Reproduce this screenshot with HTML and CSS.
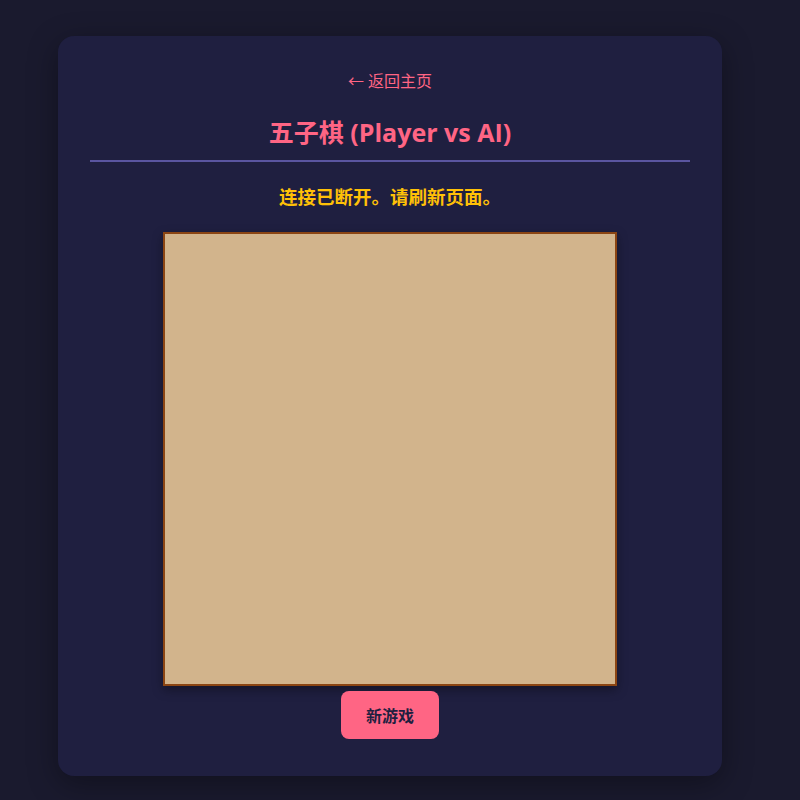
FILE: index.html
```html
<!DOCTYPE html>
<html lang="zh">
<head>
<meta charset="utf-8">
<title>五子棋</title>
<link rel="stylesheet" href="styles.css">
</head>
<body>
<main class="card">
  <a class="back" href="#">← 返回主页</a>
  <h1 class="title">五子棋 (Player vs AI)</h1>
  <p class="status">连接已断开。请刷新页面。</p>
  <div class="board"></div>
  <button class="btn">新游戏</button>
</main>
</body>
</html>
```
FILE: styles.css
```css
html, body {
  margin: 0;
  padding: 0;
}
body {
  background: #1a1a2e;
  font-family: "Open Sans", "Noto Sans CJK SC", sans-serif;
  min-height: 800px;
  display: flex;
  justify-content: center;
  padding-right: 20px;
}
.card {
  margin-top: 36px;
  width: 664px;
  height: 740px;
  box-sizing: border-box;
  background: #1f1f40;
  border-radius: 16px;
  box-shadow: 0 8px 30px rgba(0, 0, 0, 0.35);
  padding: 32px;
  display: flex;
  flex-direction: column;
  align-items: center;
}
.back {
  color: #ff6584;
  text-decoration: none;
  font-size: 16px;
  line-height: 22px;
  margin-top: 2px;
}
.title {
  align-self: stretch;
  text-align: center;
  color: #ff6584;
  font-size: 25px;
  font-weight: 700;
  line-height: 34px;
  margin: 23px 0 0;
  padding-bottom: 11px;
  border-bottom: 2px solid #5a55a0;
}
.status {
  color: #ffc107;
  font-size: 18.5px;
  font-weight: 700;
  line-height: 26px;
  margin: 22px 0 0;
}
.board {
  margin-top: 22px;
  width: 450px;
  height: 450px;
  background: #d2b48c;
  border: 2px solid #8b4513;
  box-shadow: 0 4px 10px rgba(0, 0, 0, 0.35);
}
.btn {
  margin-top: 5px;
  width: 98px;
  height: 48px;
  border: none;
  border-radius: 8px;
  background: #ff6584;
  color: #1f1f40;
  font-family: "Open Sans", "Noto Sans CJK SC", sans-serif;
  font-size: 16px;
  font-weight: 700;
}
```
